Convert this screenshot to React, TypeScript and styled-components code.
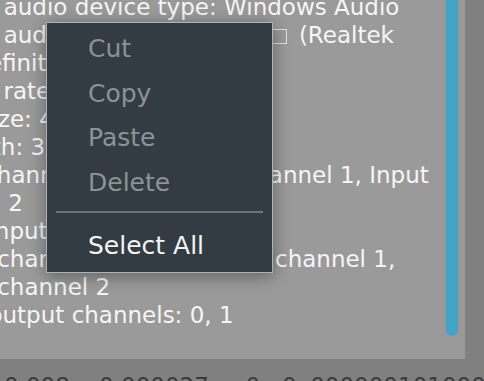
import styled, { createGlobalStyle } from 'styled-components'

const GlobalStyle = createGlobalStyle`
  html, body {
    margin: 0;
    padding: 0;
    background: #808080;
    overflow: hidden;
  }
  body {
    font-family: 'DejaVu Sans', Verdana, sans-serif;
  }
`

const Window = styled.div`
  width: 484px;
  height: 381px;
  display: flex;
  flex-direction: column;
  background: #808080;
  overflow: hidden;
  position: relative;
`

const EditorPanel = styled.div`
  width: 465px;
  height: 359px;
  flex-shrink: 0;
  display: flex;
  background: #9a9a9a;
  overflow: hidden;
`

const LogViewport = styled.div`
  flex: 1;
  min-width: 0;
  overflow: hidden;
`

const LogLines = styled.div`
  margin: -7px 0 0 -90px;
  font-size: 23px;
  line-height: 28px;
  color: #f6f6f6;
  white-space: pre;
`

const LogLine = styled.div``

const MissingGlyph = styled.span`
  display: inline-block;
  width: 13px;
  height: 13px;
  margin: 0 12px 0 1px;
  border: 1px solid #e2e2e2;
  vertical-align: -1px;
`

const ScrollTrack = styled.div`
  width: 12px;
  padding-right: 7px;
  flex-shrink: 0;
`

const ScrollThumb = styled.div`
  width: 12px;
  height: 336px;
  background: #42a3c9;
  border-radius: 0 0 6px 6px;
`

const StatusStrip = styled.div`
  flex: 1;
  padding: 14px 0 0 4px;
  font-size: 23px;
  line-height: 27px;
  color: #3a3a3a;
  white-space: pre;
  overflow: hidden;
`

const Menu = styled.div`
  position: absolute;
  left: 46px;
  top: 22px;
  width: 225px;
  height: 245px;
  padding-top: 4px;
  box-sizing: content-box;
  background: #323c42;
  border: 1px solid #aeb3b6;
  box-shadow: 0 3px 16px rgba(0, 0, 0, 0.38);
  display: flex;
  flex-direction: column;
`

const MenuItem = styled.div<{ $disabled?: boolean }>`
  height: 44.5px;
  line-height: 44.5px;
  padding-left: 41px;
  font-size: 25px;
  color: ${({ $disabled }) => ($disabled ? '#8a9397' : '#f4f4f4')};
`

const MenuSeparator = styled.div`
  height: 2px;
  margin: 6px 9px 11px;
  background: #6c7478;
`

const lines = [
  'Current audio device type: Windows Audio',
  null,
  'High Definition Audio)',
  'Sample rate: 48000 Hz',
  'Block size: 480 samples',
  'Bit depth: 32',
  ' Input channel names: Input channel 1, Input',
  'channel 2',
  'Active input channels: 0, 1',
  'Output channel names: Output channel 1,',
  'Output channel 2',
  'Active output channels: 0, 1',
]

export default function App() {
  return (
    <Window>
      <GlobalStyle />
      <EditorPanel>
        <LogViewport>
          <LogLines>
            {lines.map((line, i) =>
              line === null ? (
                <LogLine key={i}>
                  Current audio device: Speakers
                  <MissingGlyph />
                  (Realtek
                </LogLine>
              ) : (
                <LogLine key={i}>{line}</LogLine>
              )
            )}
          </LogLines>
        </LogViewport>
        <ScrollTrack>
          <ScrollThumb />
        </ScrollTrack>
      </EditorPanel>
      <StatusStrip>{'0.008    0.000027     0   0x00000010100000101010101'}</StatusStrip>

      <Menu>
        <MenuItem $disabled>Cut</MenuItem>
        <MenuItem $disabled>Copy</MenuItem>
        <MenuItem $disabled>Paste</MenuItem>
        <MenuItem $disabled>Delete</MenuItem>
        <MenuSeparator />
        <MenuItem>Select All</MenuItem>
      </Menu>
    </Window>
  )
}
